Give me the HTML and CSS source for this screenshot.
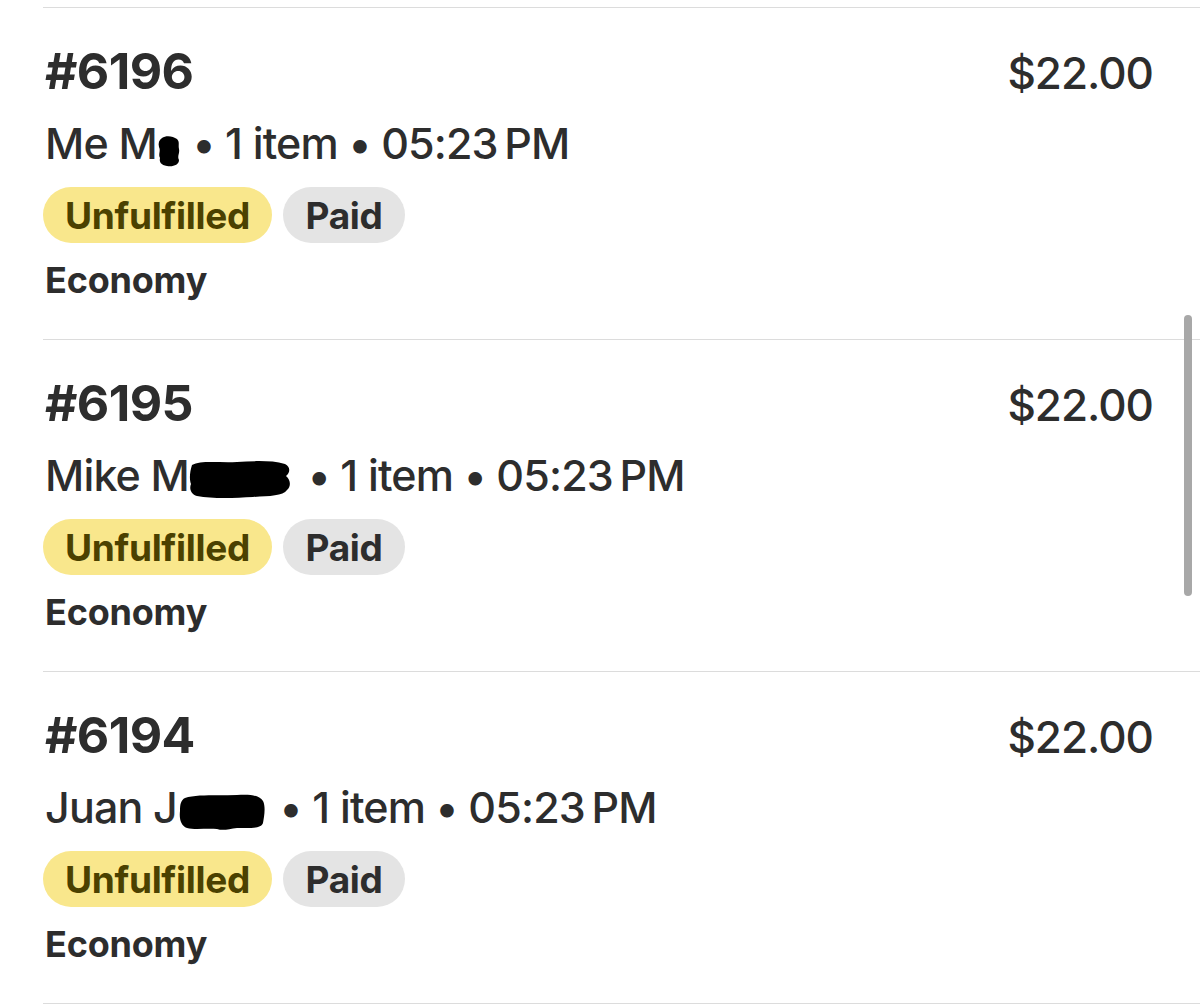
FILE: index.html
```html
<!DOCTYPE html>
<html lang="en">
<head>
<meta charset="utf-8">
<title>Orders</title>
<link rel="stylesheet" href="styles.css">
</head>
<body>
<div class="screen">
  <ul class="orders">
    <li class="order">
      <div class="order-head">
        <span class="order-no">#6196</span>
        <span class="order-total">$22.00</span>
      </div>
      <div class="order-meta">Me M<svg class="redact redact-sm" viewBox="0 0 22 32" aria-hidden="true"><path d="M4 3 C8 0 15 1 19 4 C22 7 20 10 21 14 C22 18 19 21 21 25 C21 30 15 32 9 31 C3 30 1 27 2 23 C0 19 3 16 1 12 C0 8 1 5 4 3 Z"/></svg> • 1 item • 05:23&#8201;PM</div>
      <div class="badges">
        <span class="badge badge-warn">Unfulfilled</span>
        <span class="badge badge-neutral">Paid</span>
      </div>
      <div class="order-ship">Economy</div>
    </li>
    <li class="order">
      <div class="order-head">
        <span class="order-no">#6195</span>
        <span class="order-total">$22.00</span>
      </div>
      <div class="order-meta">Mike M<svg class="redact redact-lg" viewBox="0 0 102 40" aria-hidden="true"><path d="M3 6 C12 1 30 4 48 3 C64 2 82 1 96 5 C102 8 101 14 97 17 C102 21 102 28 98 31 C94 37 80 37 64 38 C46 39 24 40 8 37 C2 35 0 30 2 25 C0 20 1 12 3 6 Z"/></svg> • 1 item • 05:23&#8201;PM</div>
      <div class="badges">
        <span class="badge badge-warn">Unfulfilled</span>
        <span class="badge badge-neutral">Paid</span>
      </div>
      <div class="order-ship">Economy</div>
    </li>
    <li class="order">
      <div class="order-head">
        <span class="order-no">#6194</span>
        <span class="order-total">$22.00</span>
      </div>
      <div class="order-meta">Juan J<svg class="redact redact-md" viewBox="0 0 86 38" aria-hidden="true"><path d="M6 5 C18 1 40 3 58 2 C70 1 80 2 84 8 C87 14 85 24 84 30 C82 36 70 35 58 35 C50 36 44 38 38 36 C28 35 16 37 8 35 C2 33 0 26 1 18 C1 11 2 7 6 5 Z"/></svg> • 1 item • 05:23&#8201;PM</div>
      <div class="badges">
        <span class="badge badge-warn">Unfulfilled</span>
        <span class="badge badge-neutral">Paid</span>
      </div>
      <div class="order-ship">Economy</div>
    </li>
  </ul>
  <div class="scrollbar"></div>
</div>
</body>
</html>
```

FILE: styles.css
```css
* {
  box-sizing: border-box;
}

html, body {
  margin: 0;
  padding: 0;
  background: #ffffff;
}

body {
  font-family: Inter, "Noto Sans", "Liberation Sans", sans-serif;
  color: #2d2d2d;
  width: 1200px;
  height: 1005px;
  overflow: hidden;
}

.screen {
  position: relative;
  padding-top: 7px;
  height: 1005px;
}

.orders {
  list-style: none;
  margin: 0;
  padding: 0 0 0 43px;
}

.order {
  border-top: 1px solid #dcdcdc;
  padding: 33px 47px 37px 2px;
}

.order:last-child {
  border-bottom: 1px solid #dcdcdc;
}

.order-head {
  display: flex;
  justify-content: space-between;
  align-items: baseline;
  height: 60px;
}

.order-no {
  font-size: 50px;
  line-height: 60px;
  font-weight: 700;
  letter-spacing: -0.6px;
}

.order-total {
  font-size: 44px;
  line-height: 60px;
  font-weight: 500;
  letter-spacing: -1px;
}

.order-meta {
  margin-top: 17px;
  font-size: 43px;
  line-height: 50px;
  font-weight: 500;
  letter-spacing: -0.85px;
  white-space: nowrap;
}

.redact {
  display: inline-block;
  fill: #000;
  vertical-align: -8px;
}

.redact-sm {
  width: 22px;
  height: 32px;
  margin-left: 1px;
  margin-right: 2px;
}

.redact-lg {
  width: 102px;
  height: 40px;
  margin-right: 6px;
}

.redact-md {
  width: 86px;
  height: 38px;
  margin-left: 2px;
  margin-right: 4px;
}

.badges {
  display: flex;
  gap: 11px;
  margin-top: 19px;
  margin-left: -2px;
}

.badge {
  display: inline-flex;
  align-items: center;
  justify-content: center;
  height: 56px;
  padding: 0 20px;
  border-radius: 28px;
  font-size: 37px;
  font-weight: 700;
  letter-spacing: -0.3px;
}

.badge-warn {
  background: #f9e78c;
  color: #4b4100;
  width: 229px;
}

.badge-neutral {
  background: #e4e4e4;
  color: #2d2d2d;
  width: 122px;
}

.order-ship {
  margin-top: 15px;
  font-size: 36px;
  line-height: 44px;
  font-weight: 700;
  letter-spacing: -0.2px;
}

.scrollbar {
  position: absolute;
  left: 1184px;
  top: 315px;
  width: 8px;
  height: 281px;
  border-radius: 4px;
  background: #a8a8a8;
}
```
